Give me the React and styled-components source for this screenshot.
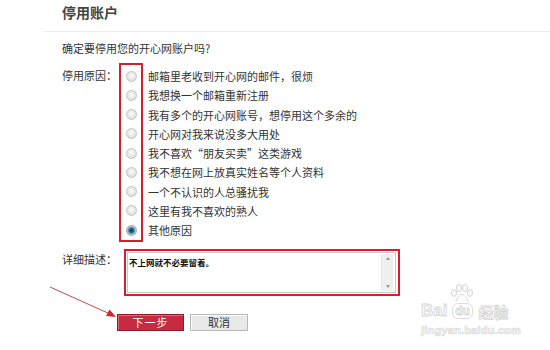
import React from "react";
import styled, { createGlobalStyle } from "styled-components";

const Global = createGlobalStyle`
  html, body { margin: 0; padding: 0; background: #fff; }
  body { font-family: "Noto Sans CJK SC", "Liberation Sans", sans-serif; color: #333; }
`;

const Page = styled.div`
  position: relative;
  width: 550px;
  height: 350px;
  overflow: hidden;
  background: #fff;
  padding-left: 43px;
  box-sizing: border-box;
`;

const Header = styled.div`
  height: 32px;
  box-sizing: border-box;
  border-bottom: 1px solid #eeeeee;
  padding-left: 19px;
  display: flex;
  align-items: center;
`;

const Title = styled.h1`
  margin: 0;
  font-size: 14px;
  font-weight: 700;
  color: #444;
  line-height: 16px;
  margin-top: -8px;
`;

const Form = styled.div`
  padding-left: 19px;
  display: flex;
  flex-direction: column;
`;

const Question = styled.p`
  margin: 8px 0 0;
  font-size: 11px;
  line-height: 16px;
`;

const Row = styled.div`
  display: flex;
  align-items: flex-start;
  margin-top: ${(p) => p.$top}px;
`;

const Label = styled.div`
  width: ${(p) => p.$w}px;
  flex: none;
  font-size: 11px;
  line-height: ${(p) => p.$lh}px;
  padding-top: ${(p) => p.$pt || 0}px;
  white-space: nowrap;
`;

const Reasons = styled.div`
  position: relative;
  display: flex;
  flex-direction: column;
`;

const RedMark = styled.div`
  position: absolute;
  left: 0;
  top: -3.5px;
  width: 24px;
  height: 179px;
  box-sizing: border-box;
  border: 2px solid #d3202c;
  pointer-events: none;
`;

const Option = styled.label`
  display: flex;
  align-items: center;
  height: 19.25px;
  font-size: 11px;
  white-space: nowrap;
`;

const Radio = styled.input.attrs({ type: "radio", name: "reason" })`
  appearance: none;
  -webkit-appearance: none;
  margin: 0 11px 0 7px;
  width: 11px;
  height: 11px;
  border-radius: 50%;
  border: 1px solid #c4c4c4;
  box-sizing: border-box;
  background: radial-gradient(circle at 50% 40%, #fbfbfb 0%, #e4e4e4 60%, #d2d2d2 100%);
  position: relative;
  &:checked {
    background: radial-gradient(circle at 50% 50%, #0d3d5e 0%, #1b5f85 30%, #7fa6bf 55%, #e6e6e6 75%);
    border-color: #9aa6ae;
  }
`;

const RedFrame = styled.div`
  margin-left: 5px;
  border: 2px solid #d3202c;
  padding: 1px 2px 1px 1px;
  width: 276px;
  height: 47px;
  box-sizing: border-box;
`;

const Field = styled.div`
  display: flex;
  height: 100%;
  border: 1px solid #c9c9c9;
  box-sizing: border-box;
  background: #fff;
`;

const TextArea = styled.textarea`
  flex: 1;
  border: none;
  outline: none;
  resize: none;
  overflow: hidden;
  padding: 2px 0 0 1px;
  margin: 0;
  font-family: "Noto Sans CJK SC", sans-serif;
  font-size: 8.5px;
  font-weight: 700;
  line-height: 14px;
  color: #111;
  background: transparent;
`;

const Scrollbar = styled.div`
  width: 12px;
  margin: 1px 2px 1px 0;
  background: #f0f0f0;
  border-left: 1px solid #e6e6e6;
  display: flex;
  flex-direction: column;
  justify-content: space-between;
  align-items: center;
  padding: 3px 0;
  box-sizing: border-box;
`;

const Arrow = styled.span`
  width: 0;
  height: 0;
  border-left: 2.5px solid transparent;
  border-right: 2.5px solid transparent;
  ${(p) =>
    p.$up
      ? "border-bottom: 3px solid #999;"
      : "border-top: 3px solid #999;"}
`;

const Buttons = styled.div`
  display: flex;
  gap: 6px;
  margin: 18px 0 0 55px;
`;

const Button = styled.button`
  height: 17px;
  width: ${(p) => p.$w}px;
  padding: 0;
  font-family: "Noto Sans CJK SC", sans-serif;
  font-size: 11px;
  line-height: 15px;
  letter-spacing: ${(p) => (p.$primary ? "1px" : "0")};
  color: ${(p) => (p.$primary ? "#fff" : "#333")};
  background: ${(p) => (p.$primary ? "#c92a43" : "#e9e9e9")};
  border: 1px solid ${(p) => (p.$primary ? "#8e1a2a" : "#b8b8b8")};
  box-shadow: inset 1px 1px 0 ${(p) => (p.$primary ? "#e0677a" : "#fafafa")};
  cursor: pointer;
`;

const Pointer = styled.svg`
  position: absolute;
  left: 0;
  top: 0;
  pointer-events: none;
`;

const Watermark = styled.div`
  position: absolute;
  left: 421px;
  top: 286px;
  display: flex;
  flex-direction: column;
  pointer-events: none;
`;

const MarkTop = styled.div`
  display: flex;
  align-items: flex-end;
  height: 33px;
`;

const Outline = styled.span`
  font-family: "Liberation Sans", sans-serif;
  font-weight: 700;
  font-size: ${(p) => p.$size}px;
  line-height: 1;
  color: #fafafa;
  -webkit-text-stroke: 0.8px #d6d6d6;
`;

const DuBox = styled.div`
  position: relative;
  margin: 0 3px 0 2px;
  display: flex;
  flex-direction: column;
  align-items: center;
`;

const DuText = styled.span`
  font-family: "Liberation Sans", sans-serif;
  font-weight: 700;
  font-size: 12px;
  line-height: 12px;
  padding: 1px 2px;
  color: #fafafa;
  -webkit-text-stroke: 0.8px #d6d6d6;
  border: 1px solid #dcdcdc;
  border-radius: 6px;
`;

const CnMark = styled.span`
  font-family: "Noto Sans CJK SC", sans-serif;
  font-weight: 700;
  font-size: 15px;
  line-height: 1;
  color: #fafafa;
  -webkit-text-stroke: 0.8px #d6d6d6;
`;

const Site = styled.span`
  margin-top: 6px;
  font-family: "Liberation Sans", sans-serif;
  font-weight: 700;
  font-size: 11px;
  letter-spacing: 0.2px;
  line-height: 11px;
  color: #fafafa;
  -webkit-text-stroke: 0.7px #dadada;
`;

const reasons = [
  "邮箱里老收到开心网的邮件，很烦",
  "我想换一个邮箱重新注册",
  "我有多个的开心网账号，想停用这个多余的",
  "开心网对我来说没多大用处",
  "我不喜欢“朋友买卖”这类游戏",
  "我不想在网上放真实姓名等个人资料",
  "一个不认识的人总骚扰我",
  "这里有我不喜欢的熟人",
  "其他原因",
];

export default function App() {
  return (
    <>
      <Global />
      <Page>
        <Header>
          <Title>停用账户</Title>
        </Header>
        <Form>
          <Question>确定要停用您的开心网账户吗?</Question>
          <Row $top={10.4}>
            <Label $w={57} $lh={19.25}>停用原因：</Label>
            <Reasons>
              <RedMark />
              {reasons.map((r, i) => (
                <Option key={r}>
                  <Radio defaultChecked={i === reasons.length - 1} />
                  {r}
                </Option>
              ))}
            </Reasons>
          </Row>
          <Row $top={9.4}>
            <Label $w={57} $lh={14} $pt={3}>详细描述：</Label>
            <RedFrame>
              <Field>
                <TextArea defaultValue="不上网就不必要留着。" />
                <Scrollbar>
                  <Arrow $up />
                  <Arrow />
                </Scrollbar>
              </Field>
            </RedFrame>
          </Row>
          <Buttons>
            <Button $primary $w={67}>下一步</Button>
            <Button $w={58}>取消</Button>
          </Buttons>
        </Form>

        <Pointer width="550" height="350" viewBox="0 0 550 350">
          <line x1="50" y1="287" x2="109" y2="313.5" stroke="#c9474a" strokeWidth="1" />
          <polygon points="116,317 106,316 109.5,309.5" fill="#d0262c" />
        </Pointer>

        <Watermark>
          <MarkTop>
            <Outline $size={17}>Bai</Outline>
            <DuBox>
              <svg width="26" height="20" viewBox="0 0 26 20">
                <g fill="#fbfbfb" stroke="#d6d6d6" strokeWidth="1">
                  <ellipse cx="5" cy="10" rx="2.6" ry="3.4" />
                  <ellipse cx="10" cy="5" rx="2.6" ry="3.6" />
                  <ellipse cx="16" cy="5" rx="2.6" ry="3.6" />
                  <ellipse cx="21" cy="10" rx="2.6" ry="3.4" />
                  <path d="M7 19 C8 14 11 11.5 13 11.5 C15 11.5 18 14 19 19" />
                </g>
              </svg>
              <DuText>du</DuText>
            </DuBox>
            <CnMark>经验</CnMark>
          </MarkTop>
          <Site>jingyan.baidu.com</Site>
        </Watermark>
      </Page>
    </>
  );
}
